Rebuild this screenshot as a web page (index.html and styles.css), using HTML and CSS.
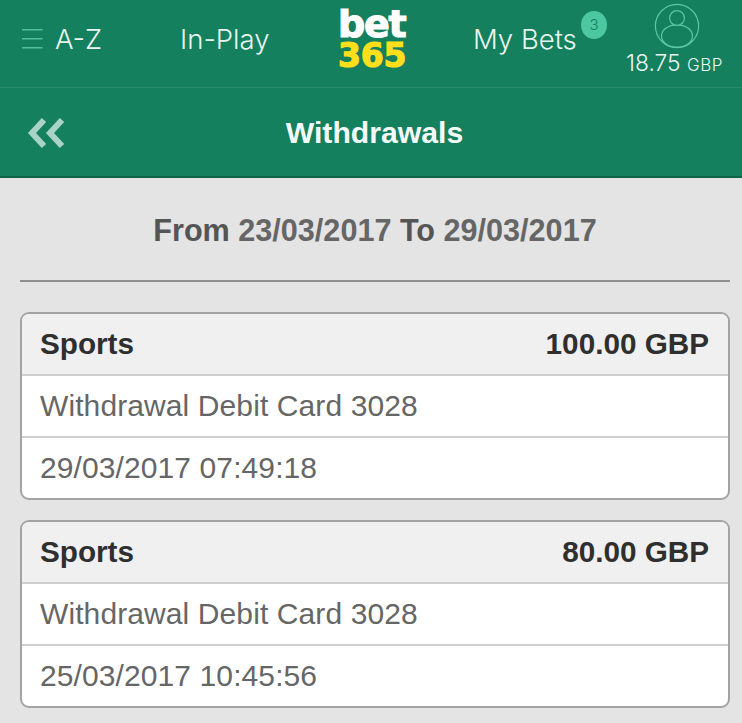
FILE: index.html
```html
<!DOCTYPE html>
<html lang="en">
<head>
    <meta charset="UTF-8">
    <meta name="viewport" content="width=device-width, initial-scale=1.0">
    <title>Withdrawals</title>
    <link rel="stylesheet" href="styles.css">
</head>
<body>
    <nav class="topbar">
        <div class="nav-az">
            <svg class="burger" width="22" height="20" viewBox="0 0 22 20">
                <path d="M0 0.8H20.5M0 9.8H20.5M0 18.8H20.5" stroke="#4cc19a" stroke-width="1.6" fill="none"/>
            </svg>
            <span>A-Z</span>
        </div>
        <div class="nav-inplay">In-Play</div>
        <div class="logo">
            <span class="logo-bet">bet</span>
            <span class="logo-365">365</span>
        </div>
        <div class="nav-bets">
            My Bets
            <span class="badge">3</span>
        </div>
        <div class="account">
            <svg class="avatar" width="46" height="46" viewBox="0 0 46 46" fill="none" stroke="#5cc7a3" stroke-width="1.2">
                <circle cx="23" cy="23" r="21.6"/>
                <ellipse cx="23" cy="33" rx="15.5" ry="11.2"/>
                <circle cx="23" cy="15" r="7.4" fill="#14805e"/>
            </svg>
            <div class="balance">18.75 <small>GBP</small></div>
        </div>
    </nav>

    <header class="subbar">
        <svg class="back" width="38" height="32" viewBox="0 0 38 32">
            <path d="M17 3L5 16L17 29M35 3L23 16L35 29" stroke="#a9d3c5" stroke-width="6" fill="none"/>
        </svg>
        <h1>Withdrawals</h1>
    </header>

    <main class="content">
        <div class="range">From <span class="range-date">23/03/2017</span> To <span class="range-date">29/03/2017</span></div>

        <div class="card">
            <div class="card-head"><span>Sports</span><span>100.00 GBP</span></div>
            <div class="card-row">Withdrawal Debit Card 3028</div>
            <div class="card-row">29/03/2017 07:49:18</div>
        </div>

        <div class="card">
            <div class="card-head"><span>Sports</span><span>80.00 GBP</span></div>
            <div class="card-row">Withdrawal Debit Card 3028</div>
            <div class="card-row">25/03/2017 10:45:56</div>
        </div>
    </main>
</body>
</html>
```

FILE: styles.css
```css
html, body {
    height: 100%;
}
body {
    margin: 0;
    overflow: hidden;
    background: #e4e4e4;
    font-family: 'Liberation Sans', Arial, sans-serif;
}
.topbar {
    display: flex;
    height: 88px;
    box-sizing: border-box;
    padding-left: 22px;
    background: #14805e;
    border-bottom: 1px solid #2a8c6d;
    color: #e9f5f0;
    font-family: 'Inter', sans-serif;
    font-weight: 300;
    font-size: 27.5px;
    line-height: 78px;
}
.nav-az {
    display: flex;
    align-items: center;
    align-self: flex-start;
    gap: 11px;
    width: 158px;
    height: 78px;
}
.nav-inplay {
    width: 159px;
}
.logo {
    width: 134px;
    padding-top: 7px;
    display: flex;
    flex-direction: column;
    font-family: 'DejaVu Sans', sans-serif;
    font-weight: 700;
}
.logo-bet {
    margin-left: -1px;
    color: #fff;
    font-size: 38px;
    line-height: 35px;
    letter-spacing: -1.2px;
    -webkit-text-stroke: 1.2px #fff;
}
.logo-365 {
    margin-left: -1px;
    color: #ffdf1b;
    font-size: 33px;
    line-height: 27px;
    letter-spacing: -0.2px;
    -webkit-text-stroke: 1.2px #ffdf1b;
}
.nav-bets {
    position: relative;
    width: 153px;
}
.badge {
    position: absolute;
    left: 108px;
    top: 11px;
    width: 26px;
    height: 28px;
    border-radius: 50%;
    background: #4cc79f;
    color: #14805e;
    font-size: 15px;
    line-height: 28px;
    text-align: center;
}
.account {
    display: flex;
    flex-direction: column;
    align-items: center;
    width: 97px;
    padding-top: 3px;
}
.avatar {
    display: block;
    margin-left: 5px;
}
.balance {
    font-size: 22.8px;
    line-height: 27px;
    white-space: nowrap;
}
.balance small {
    font-size: 17px;
    letter-spacing: 0.5px;
}
.subbar {
    position: relative;
    display: flex;
    align-items: center;
    justify-content: center;
    height: 90px;
    padding: 2px 0 0 7px;
    box-sizing: border-box;
    background: #14805e;
    border-bottom: 2px solid #0d6248;
}
.back {
    position: absolute;
    left: 27px;
    top: 29px;
}
.subbar h1 {
    margin: 0;
    color: #f4faf8;
    font-size: 30.2px;
    font-weight: 700;
}
.content {
    padding: 0 12px 0 20px;
}
.range {
    height: 104px;
    line-height: 104px;
    box-sizing: border-box;
    border-bottom: 2px solid #8f8f8f;
    margin-bottom: 30px;
    text-align: center;
    color: #555;
    font-size: 30.6px;
    font-weight: 700;
}
.range-date {
    color: #666;
}
.card {
    border: 2px solid #a3a3a3;
    border-radius: 9px;
    background: #fff;
    overflow: hidden;
    margin-bottom: 20px;
}
.card-head {
    display: flex;
    justify-content: space-between;
    height: 60px;
    line-height: 60px;
    padding: 0 19px 0 18px;
    background: #f0f0f0;
    color: #2f2f2f;
    font-size: 29.7px;
    font-weight: 700;
}
.card-row {
    height: 60px;
    line-height: 60px;
    padding: 0 18px;
    border-top: 2px solid #cfcfcf;
    color: #666;
    font-size: 30px;
    letter-spacing: 0.1px;
}
```
